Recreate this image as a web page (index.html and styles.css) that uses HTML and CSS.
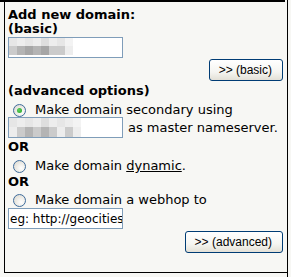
FILE: index.html
```html
<!DOCTYPE html>
<html>
<head>
	<meta charset="utf-8">
	<title>Add new domain</title>
	<link rel="stylesheet" href="styles.css">
</head>
<body>
	<div class="frame">
		<div class="topbar"></div>
		<form class="panel">
			<!--- basic add --->
			<div class="heading">Add new domain:<br>(basic)</div>
			<div class="textbox">
				<div class="blur">
					<span class="px a"></span><span class="px b"></span><span class="px a"></span><span class="px b"></span><span class="px c"></span><span class="px b"></span><span class="px a"></span><span class="px d"></span>
					<span class="px e"></span><span class="px f"></span><span class="px g"></span><span class="px f"></span><span class="px g"></span><span class="px e"></span><span class="px e"></span><span class="px b"></span>
				</div>
			</div>
			<div class="actions"><button type="button" class="btn">&gt;&gt; (basic)</button></div>

			<!--- advanced --->
			<div class="heading adv">(advanced options)</div>
			<label class="option"><span class="radio checked"></span>Make domain secondary using</label>
			<div class="inline-row">
				<div class="textbox">
					<div class="blur wide">
						<span class="px a"></span><span class="px b"></span><span class="px a"></span><span class="px b"></span><span class="px c"></span><span class="px b"></span><span class="px a"></span><span class="px b"></span><span class="px d"></span>
						<span class="px b"></span><span class="px e"></span><span class="px f"></span><span class="px e"></span><span class="px f"></span><span class="px e"></span><span class="px b"></span><span class="px e"></span><span class="px b"></span>
					</div>
				</div>
				<span class="after">as master nameserver.</span>
			</div>
			<div class="or">OR</div>
			<label class="option opt2"><span class="radio"></span>Make domain&nbsp;<a class="link">dynamic</a>.</label>
			<div class="or or2">OR</div>
			<label class="option opt3"><span class="radio"></span>Make domain a webhop to</label>
			<input class="textbox field" type="text" value="eg: http://geocities">
			<div class="actions act2"><button type="button" class="btn">&gt;&gt; (advanced)</button></div>
		</form>
	</div>
</body>
</html>
```

FILE: styles.css
```css
	body {
		margin: 0;
		background-color: #f7f7f4;
		font-family: "DejaVu Sans", Verdana, sans-serif;
		font-size: 13px;
		color: #000;
	}
	/* outer cell with the column line on the right */
	.frame {
		width: 287px;
		height: 277px;
		border-right: 1px solid #000;
	}
	.topbar {
		width: 285px;
		height: 2px;
		background-color: #000;
	}
	.panel {
		box-sizing: border-box;
		display: flex;
		flex-direction: column;
		align-items: flex-start;
		margin: 0 0 0 4px;
		height: 271px;
		padding: 6px 4px 0 3px;
		border-left: 1px solid #000;
		border-bottom: 1px solid #000;
	}
	.heading {
		font-weight: bold;
		line-height: 14px;
	}
	.heading.adv {
		margin-top: 3px;
	}
	/* xp style text boxes */
	.textbox {
		box-sizing: border-box;
		width: 115px;
		height: 21px;
		margin-top: 1px;
		border: 1px solid #7f9db9;
		background-color: #fff;
	}
	.blur {
		display: grid;
		grid-template-columns: repeat(8, 8px);
		grid-template-rows: 8px 9px;
	}
	.blur.wide {
		grid-template-columns: repeat(9, 8px);
		grid-template-rows: 9px 10px;
	}
	.px.a { background-color: #e6e6e6; }
	.px.b { background-color: #ededed; }
	.px.c { background-color: #dedede; }
	.px.d { background-color: #f3f3f3; }
	.px.e { background-color: #cbcbcb; }
	.px.f { background-color: #b4b4b4; }
	.px.g { background-color: #a6a6a6; }
	.field {
		padding: 0 0 0 1px;
		font-family: "DejaVu Sans", Verdana, sans-serif;
		font-size: 12px;
		color: #000;
		margin-top: 1px;
	}
	.actions {
		align-self: stretch;
		display: flex;
		justify-content: flex-end;
		margin-top: 1px;
	}
	.act2 {
		margin-top: 2px;
	}
	/* xp style push button */
	.btn {
		height: 22px;
		padding: 0 10px 0 9px;
		border: 1px solid #003c74;
		border-radius: 3px;
		background: linear-gradient(#ffffff, #f5f5f1 60%, #e3e0d6);
		font-family: "Liberation Sans", Arial, sans-serif;
		font-size: 12px;
		color: #000;
	}
	.option {
		display: flex;
		align-items: center;
		line-height: 14px;
		margin-top: 5px;
	}
	.opt3 {
		margin-top: 4px;
	}
	.radio {
		box-sizing: border-box;
		width: 13px;
		height: 13px;
		margin: 0 9px 0 5px;
		border: 1px solid #3f6c9c;
		border-radius: 50%;
		background: radial-gradient(circle at 65% 65%, #ffffff, #e4e2da 70%, #d0cec4);
		display: flex;
		align-items: center;
		justify-content: center;
	}
	.radio.checked::after {
		content: "";
		width: 5px;
		height: 5px;
		border-radius: 50%;
		background: radial-gradient(circle at 40% 40%, #5fd35f, #21a121);
	}
	.inline-row {
		display: flex;
		align-items: center;
	}
	.inline-row .textbox {
		margin-top: 0;
	}
	.after {
		margin-left: 5px;
		line-height: 14px;
	}
	.link {
		color: #000;
		text-decoration: underline;
	}
	.or {
		font-weight: bold;
		line-height: 14px;
		margin-top: 2px;
	}
```
